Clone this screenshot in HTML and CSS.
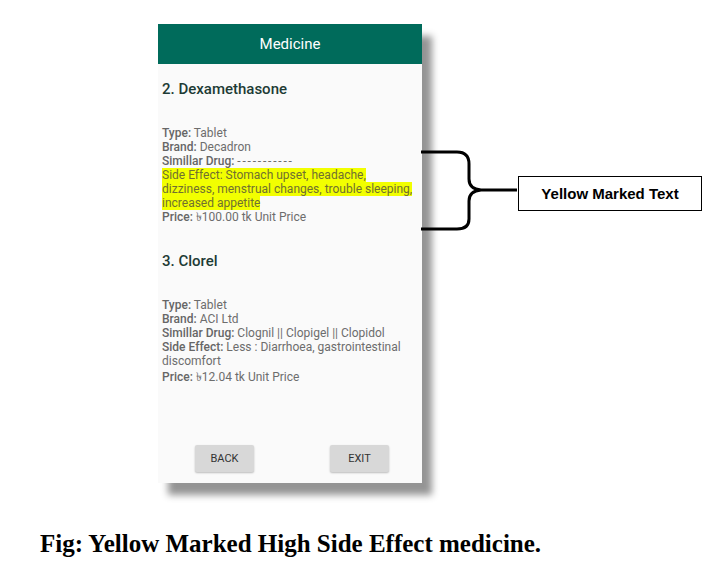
FILE: index.html
```html
<!DOCTYPE html>
<html>
<head>
<meta charset="utf-8">
<link rel="stylesheet" href="styles.css">
</head>
<body>
<div class="figure">
  <div class="phone">
    <div class="appbar">Medicine</div>
    <div class="content">
      <div class="drug">
        <h2 class="name">2. Dexamethasone</h2>
        <div class="details">
          <div class="row"><b>Type:</b> Tablet</div>
          <div class="row"><b>Brand:</b> Decadron</div>
          <div class="row"><b>Simillar Drug:</b> <span class="dash">-----------</span></div>
          <div class="row"><span class="mark">Side Effect: Stomach upset, headache,<br>dizziness, menstrual changes, trouble sleeping,<br>increased appetite</span></div>
          <div class="row"><b>Price:</b> ৳100.00 tk Unit Price</div>
        </div>
      </div>
      <div class="drug">
        <h2 class="name">3. Clorel</h2>
        <div class="details">
          <div class="row"><b>Type:</b> Tablet</div>
          <div class="row"><b>Brand:</b> ACI Ltd</div>
          <div class="row"><b>Simillar Drug:</b> Clognil || Clopigel || Clopidol</div>
          <div class="row"><b>Side Effect:</b> Less : Diarrhoea, gastrointestinal<br>discomfort</div>
          <div class="row price"><b>Price:</b> ৳12.04 tk Unit Price</div>
        </div>
      </div>
    </div>
    <div class="buttons">
      <button class="btn">BACK</button>
      <button class="btn">EXIT</button>
    </div>
  </div>

  <svg class="bracket" width="110" height="90" viewBox="0 0 110 90">
    <path d="M2 3 H38 Q50 3 50 15 V30 Q50 40 62 41 H98 M62 41 Q50 42 50 52 V70 Q50 80 38 80 H2" fill="none" stroke="#000" stroke-width="3"/>
  </svg>
  <div class="callout">Yellow Marked Text</div>

  <p class="caption">Fig: Yellow Marked High Side Effect medicine.</p>
</div>
</body>
</html>
```
FILE: styles.css
```css
html, body {
  margin: 0;
  padding: 0;
  background: #ffffff;
}
.figure {
  position: relative;
  width: 711px;
  height: 574px;
  padding-top: 24px;
  box-sizing: border-box;
}
.phone {
  margin-left: 158px;
  width: 264px;
  height: 459px;
  background: #fafafa;
  display: flex;
  flex-direction: column;
  box-shadow: 10px 12px 7px rgba(0, 0, 0, 0.42);
  font-family: Roboto, "Noto Sans", sans-serif;
}
.appbar {
  height: 40px;
  background: #006b5b;
  color: #ffffff;
  font-size: 15px;
  display: flex;
  align-items: center;
  justify-content: center;
}
.content {
  flex: 1;
  padding: 16px 4px 0 4px;
  display: flex;
  flex-direction: column;
  gap: 28px;
}
.drug {
  display: flex;
  flex-direction: column;
  gap: 28px;
}
.name {
  margin: 0;
  font-size: 15px;
  line-height: 18px;
  font-weight: 500;
  color: #1d3b35;
}
.details {
  font-size: 12px;
  line-height: 14px;
  color: #6d6d6d;
  white-space: nowrap;
}
.details b {
  font-weight: 500;
  color: #666;
}
.dash {
  letter-spacing: 1.8px;
}
.price {
  margin-top: 2px;
}
.mark {
  background: #f2ff00;
  color: #707030;
}
.buttons {
  display: flex;
  gap: 76px;
  padding: 0 0 11px 37px;
}
.btn {
  width: 59px;
  height: 27px;
  border: none;
  border-radius: 2px;
  background: #d8d8d8;
  color: #333;
  font-family: Roboto, "Noto Sans", sans-serif;
  font-size: 11px;
  box-shadow: 0 1px 2px rgba(0, 0, 0, 0.25);
  padding: 0;
}
.bracket {
  position: absolute;
  left: 419px;
  top: 149px;
}
.callout {
  position: absolute;
  left: 518px;
  top: 176px;
  width: 184px;
  height: 35px;
  box-sizing: border-box;
  border: 1.5px solid #000;
  background: #fff;
  display: flex;
  align-items: center;
  justify-content: center;
  font-family: "Liberation Sans", Arial, sans-serif;
  font-weight: bold;
  font-size: 15px;
  color: #000;
}
.caption {
  position: absolute;
  left: 40px;
  top: 530px;
  margin: 0;
  font-family: "Liberation Serif", "Times New Roman", serif;
  font-weight: bold;
  font-size: 25px;
  line-height: 28px;
  color: #000;
}
```
